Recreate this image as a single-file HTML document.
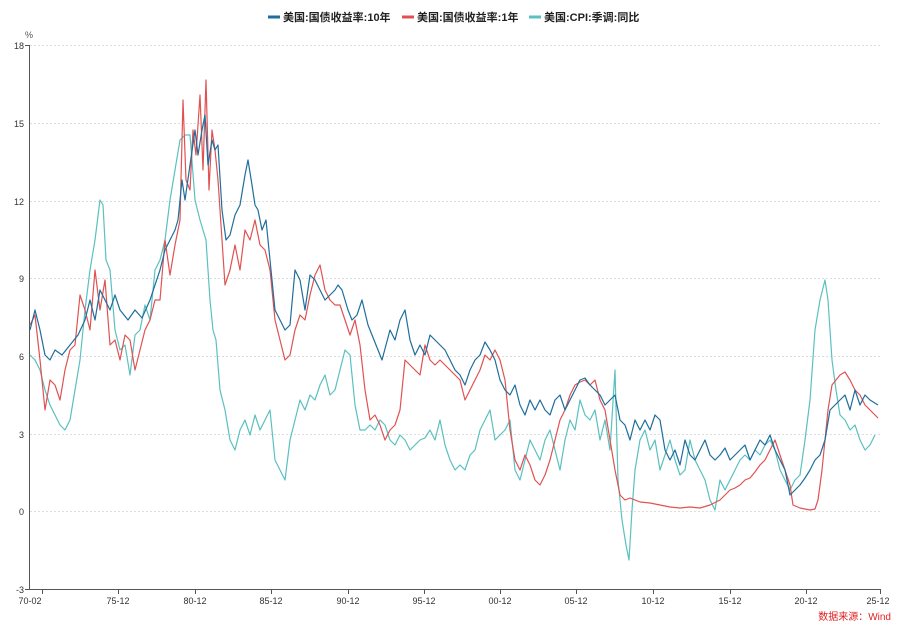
<!DOCTYPE html>
<html><head><meta charset="utf-8"><style>
html,body{margin:0;padding:0;background:#fff;}
svg{display:block;font-family:"Liberation Sans","Noto Sans CJK SC",sans-serif;}
</style></head><body>
<svg width="908" height="630" viewBox="0 0 908 630" xmlns="http://www.w3.org/2000/svg">
<g font-size="11" font-weight="bold" fill="#222">
<line x1="268" y1="17" x2="280" y2="17" stroke="#1f6e9c" stroke-width="3"/>
<text x="283" y="21">美国:国债收益率:10年</text>
<line x1="402" y1="17" x2="414" y2="17" stroke="#e05252" stroke-width="3"/>
<text x="417" y="21">美国:国债收益率:1年</text>
<line x1="529" y1="17" x2="541" y2="17" stroke="#5bc0c0" stroke-width="3"/>
<text x="544" y="21">美国:CPI:季调:同比</text>
</g>
<text x="25" y="38" font-size="9" fill="#555">%</text>
<g stroke="#ddd" stroke-dasharray="2,2" stroke-width="1">
<line x1="30" y1="45.5" x2="880" y2="45.5"/>
<line x1="30" y1="123.5" x2="880" y2="123.5"/>
<line x1="30" y1="201.5" x2="880" y2="201.5"/>
<line x1="30" y1="278.5" x2="880" y2="278.5"/>
<line x1="30" y1="356.5" x2="880" y2="356.5"/>
<line x1="30" y1="434.5" x2="880" y2="434.5"/>
<line x1="30" y1="511.5" x2="880" y2="511.5"/>
</g>
<g font-size="9" fill="#333" text-anchor="end">
<text x="24" y="49">18</text><text x="24" y="127">15</text><text x="24" y="205">12</text>
<text x="24" y="282">9</text><text x="24" y="360">6</text><text x="24" y="438">3</text>
<text x="24" y="515">0</text><text x="24" y="593">-3</text>
</g>
<g stroke="#555" stroke-width="1">
<line x1="29.5" y1="45" x2="29.5" y2="589"/>
<line x1="25" y1="45.5" x2="30" y2="45.5"/>
<line x1="25" y1="589.5" x2="30" y2="589.5"/>
<line x1="29" y1="589.5" x2="880" y2="589.5"/>
<line x1="42.5" y1="589" x2="42.5" y2="594"/><line x1="118.5" y1="589" x2="118.5" y2="594"/>
<line x1="195.5" y1="589" x2="195.5" y2="594"/><line x1="271.5" y1="589" x2="271.5" y2="594"/>
<line x1="348.5" y1="589" x2="348.5" y2="594"/><line x1="424.5" y1="589" x2="424.5" y2="594"/>
<line x1="500.5" y1="589" x2="500.5" y2="594"/><line x1="576.5" y1="589" x2="576.5" y2="594"/>
<line x1="653.5" y1="589" x2="653.5" y2="594"/><line x1="730.5" y1="589" x2="730.5" y2="594"/>
<line x1="806.5" y1="589" x2="806.5" y2="594"/><line x1="880.5" y1="589" x2="880.5" y2="594"/>
</g>
<g font-size="9" fill="#333" text-anchor="middle">
<text x="30" y="604">70-02</text><text x="118" y="604">75-12</text><text x="195" y="604">80-12</text>
<text x="271" y="604">85-12</text><text x="348" y="604">90-12</text><text x="424" y="604">95-12</text>
<text x="500" y="604">00-12</text><text x="576" y="604">05-12</text><text x="653" y="604">10-12</text>
<text x="730" y="604">15-12</text><text x="806" y="604">20-12</text><text x="878" y="604">25-12</text>
</g>
<text x="891" y="620" font-size="10" fill="#e02020" text-anchor="end">数据来源：Wind</text>
<g fill="none" stroke-width="1.2" stroke-linejoin="round">
<polyline stroke="#5bc0c0" points="30,355 35,360 40,370 45,390 50,405 55,415 60,425 65,430 70,420 75,390 80,360 85,310 90,270 95,240 100,200 103,205 106,260 110,270 115,330 120,350 125,345 130,375 135,335 140,330 145,305 150,320 155,270 160,260 165,240 170,200 175,170 180,140 185,135 190,135 195,200 200,220 203,230 206,240 210,300 213,330 216,340 220,390 225,410 230,440 235,450 240,430 245,420 250,435 255,415 260,430 265,420 270,410 275,460 280,470 285,480 290,440 295,420 300,400 305,410 310,395 315,400 320,385 325,375 330,395 335,390 340,370 345,350 350,355 355,405 360,430 365,430 370,425 375,430 380,420 385,425 390,440 395,445 400,435 405,440 410,450 415,445 420,440 425,438 430,430 435,440 440,420 445,445 450,460 455,470 460,465 465,470 470,455 475,450 480,430 485,420 490,410 495,440 500,435 505,430 510,420 515,470 520,480 525,460 530,440 535,450 540,460 545,440 550,430 555,450 560,470 565,440 570,420 575,430 580,400 585,415 590,420 595,410 600,440 605,420 610,450 615,370 618,480 622,520 626,545 629,560 632,510 635,470 640,440 645,430 650,450 655,440 660,470 665,455 670,440 675,460 680,475 685,470 690,440 695,460 700,470 705,480 710,500 715,510 720,480 725,490 730,480 735,470 740,460 745,455 750,460 755,450 760,455 765,445 770,440 775,450 780,470 785,480 790,490 795,480 800,475 805,440 810,400 815,330 820,300 825,280 828,300 832,360 836,390 840,415 845,420 850,430 855,425 860,440 865,450 870,445 875,435"/>
<polyline stroke="#e05252" points="30,325 35,315 40,360 45,410 50,380 55,385 60,400 65,370 70,350 75,345 80,295 85,310 90,330 95,270 100,310 105,280 110,345 115,340 120,360 125,335 130,340 135,370 140,350 145,330 150,320 155,300 160,300 165,240 170,275 175,245 180,220 183,100 186,180 190,190 193,130 196,155 200,95 203,170 206,80 209,190 212,130 215,150 218,180 222,240 225,285 230,270 235,245 240,270 245,230 250,240 255,220 260,245 265,250 270,270 275,320 280,340 285,360 290,355 295,330 300,315 305,320 310,295 315,275 320,265 325,290 330,300 335,305 340,305 345,320 350,335 355,320 360,345 365,390 370,420 375,415 380,425 385,440 390,430 395,425 400,410 405,360 410,365 415,370 420,375 425,345 430,360 435,365 440,360 445,365 450,370 455,375 460,380 465,400 470,390 475,380 480,370 485,355 490,360 495,350 500,360 505,380 510,430 515,460 520,470 525,455 530,465 535,480 540,485 545,475 550,460 555,440 560,420 565,410 570,395 575,385 580,382 585,380 590,385 595,380 600,400 605,410 610,440 615,470 620,495 625,500 630,498 640,502 650,503 660,505 670,507 680,508 690,507 700,508 710,505 720,500 725,495 730,490 735,488 740,485 745,480 750,478 755,472 760,465 765,460 770,450 775,440 780,455 785,470 790,485 793,505 800,508 810,510 815,509 818,500 822,470 825,440 828,410 832,385 836,380 840,375 845,372 850,380 855,390 860,395 865,405 870,410 878,418"/>
<polyline stroke="#1f6e9c" points="30,330 35,310 40,330 45,355 50,360 55,350 62,355 70,345 78,335 85,320 90,300 95,320 100,290 105,300 110,310 115,295 120,310 128,320 135,310 142,318 150,300 155,285 160,270 165,250 170,240 175,230 178,220 182,180 185,200 190,165 195,130 198,155 202,130 205,115 208,165 212,140 215,150 218,145 222,210 226,240 230,235 235,215 240,205 245,175 248,160 252,185 255,205 258,210 262,230 266,220 270,260 275,310 280,320 285,330 290,325 295,270 300,280 305,310 310,275 315,280 320,290 325,300 330,295 335,290 338,285 342,290 348,310 352,320 357,315 362,300 368,325 372,335 378,350 382,360 386,345 390,330 395,340 400,320 405,310 410,340 415,355 420,345 425,355 430,335 435,340 440,345 445,350 450,360 455,370 460,375 465,385 470,370 475,360 480,355 485,342 490,350 495,360 500,380 505,390 510,395 515,385 520,405 525,415 530,400 535,410 540,400 545,410 550,415 555,400 560,395 565,410 570,400 575,390 580,380 585,378 590,385 595,390 600,395 605,405 610,400 615,395 620,420 625,425 630,440 635,420 640,430 645,420 650,430 655,415 660,420 665,450 670,460 675,450 680,465 685,440 690,455 695,460 700,450 705,440 710,455 715,460 720,455 725,448 730,460 735,455 740,450 745,445 750,460 755,450 760,440 765,445 770,435 775,450 780,460 785,470 790,495 795,490 800,485 805,478 810,470 815,460 820,455 825,440 830,410 835,405 840,400 845,395 850,410 855,390 860,405 865,395 870,400 878,405"/>
</g>
</svg>
</body></html>
